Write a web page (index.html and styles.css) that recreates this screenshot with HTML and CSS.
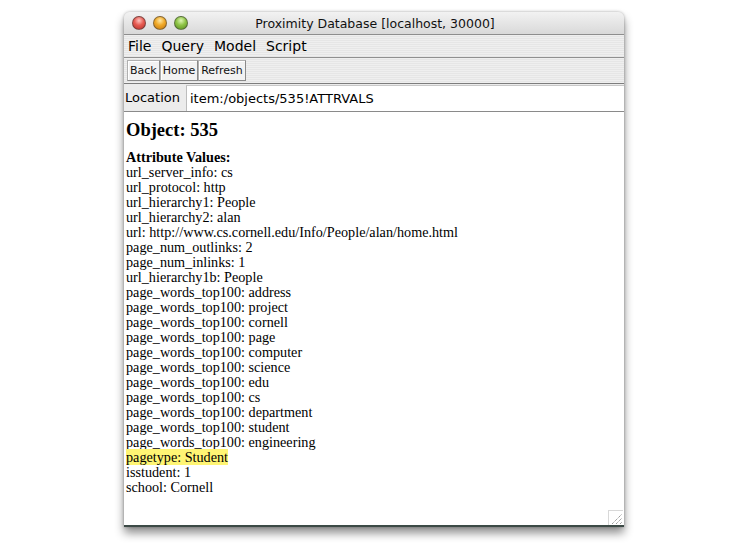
FILE: index.html
```html
<!DOCTYPE html>
<html>
<head>
<meta charset="utf-8">
<link rel="stylesheet" href="styles.css">
<title>Proximity Database</title>
</head>
<body>
<div class="stage">
  <div class="window">
    <div class="titlebar">
      <div class="lights">
        <span class="light red"></span>
        <span class="light yellow"></span>
        <span class="light green"></span>
      </div>
      <div class="title">Proximity Database [localhost, 30000]</div>
    </div>
    <div class="menubar">
      <span class="menu">File</span>
      <span class="menu">Query</span>
      <span class="menu">Model</span>
      <span class="menu">Script</span>
    </div>
    <div class="toolbar">
      <button class="tbtn">Back</button><button class="tbtn">Home</button><button class="tbtn">Refresh</button>
    </div>
    <div class="locationbar">
      <span class="loclabel">Location</span>
      <div class="locfield">item:/objects/535!ATTRVALS</div>
    </div>
    <div class="content">
      <h1 class="objtitle">Object: 535</h1>
      <div class="attrs">
        <div class="attrhead">Attribute Values:</div>
        <div>url_server_info: cs</div>
        <div>url_protocol: http</div>
        <div>url_hierarchy1: People</div>
        <div>url_hierarchy2: alan</div>
        <div>url: http://www.cs.cornell.edu/Info/People/alan/home.html</div>
        <div>page_num_outlinks: 2</div>
        <div>page_num_inlinks: 1</div>
        <div>url_hierarchy1b: People</div>
        <div>page_words_top100: address</div>
        <div>page_words_top100: project</div>
        <div>page_words_top100: cornell</div>
        <div>page_words_top100: page</div>
        <div>page_words_top100: computer</div>
        <div>page_words_top100: science</div>
        <div>page_words_top100: edu</div>
        <div>page_words_top100: cs</div>
        <div>page_words_top100: department</div>
        <div>page_words_top100: student</div>
        <div>page_words_top100: engineering</div>
        <div><span class="hl">pagetype: Student</span></div>
        <div>isstudent: 1</div>
        <div>school: Cornell</div>
      </div>
      <div class="grip">
        <svg width="14" height="14" viewBox="0 0 14 14">
          <path d="M3 13 L13 3 M7 13 L13 7 M11 13 L13 11" stroke="#8a8a8a" stroke-width="1" stroke-dasharray="1.2 0.8" fill="none"/>
        </svg>
      </div>
    </div>
  </div>
</div>
</body>
</html>
```

FILE: styles.css
```css
html, body {
  margin: 0;
  padding: 0;
  background: #ffffff;
}
.stage {
  width: 750px;
  height: 545px;
  padding: 12px 0 0 124px;
  box-sizing: border-box;
}
.window {
  width: 500px;
  height: 515px;
  display: flex;
  flex-direction: column;
  border-radius: 6px 6px 0 0;
  box-shadow: 0 6px 10px rgba(0,0,0,0.45), 0 0 3px rgba(0,0,0,0.3);
  background: #ececec;
  border-bottom: 2px solid #3c4a46;
  box-sizing: border-box;
  font-family: "DejaVu Sans", "Lucida Grande", sans-serif;
  color: #000;
}
.titlebar {
  height: 22px;
  flex: none;
  display: flex;
  align-items: center;
  border-radius: 6px 6px 0 0;
  background: linear-gradient(#f2f2f2, #d9d9d9);
  border-bottom: 1px solid #8e8e8e;
}
.lights {
  display: flex;
  gap: 7px;
  padding-left: 8px;
}
.light {
  width: 14px;
  height: 14px;
  border-radius: 50%;
  box-sizing: border-box;
  border: 1px solid rgba(60,60,60,0.55);
}
.red { background: radial-gradient(circle at 50% 30%, #ffc4c0 0%, #e65b52 45%, #b8302a 100%); }
.yellow { background: radial-gradient(circle at 50% 30%, #ffe9a6 0%, #f0a928 45%, #c5770e 100%); }
.green { background: radial-gradient(circle at 50% 30%, #def7b4 0%, #8ec446 45%, #5a8f20 100%); }
.title {
  flex: 1;
  text-align: center;
  font-size: 12.5px;
  padding-right: 62px;
  color: #111;
}
.menubar {
  height: 22px;
  flex: none;
  display: flex;
  align-items: center;
  gap: 10px;
  padding-left: 4px;
  font-size: 14px;
  background: repeating-linear-gradient(#efefef 0 1px, #e6e6e6 1px 2px);
  border-bottom: 1px solid #909090;
}
.toolbar {
  height: 25px;
  flex: none;
  display: flex;
  align-items: center;
  padding-left: 3px;
  background: repeating-linear-gradient(#efefef 0 1px, #e6e6e6 1px 2px);
  border-bottom: 1px solid #7d7d7d;
}
.tbtn {
  height: 21px;
  margin: 0;
  padding: 0 2px;
  font-family: "DejaVu Sans", sans-serif;
  font-size: 11px;
  color: #111;
  background: #f2f2f2;
  border: 1px solid #8a8a8a;
  border-left-color: #b0b0b0;
  border-top-color: #b0b0b0;
  box-shadow: inset 1px 1px 0 #ffffff;
}
.locationbar {
  height: 27px;
  flex: none;
  display: flex;
  align-items: stretch;
  background: #ececec;
  border-bottom: 1px solid #8a8a8a;
}
.loclabel {
  width: 61px;
  flex: none;
  display: flex;
  align-items: center;
  padding-left: 1px;
  font-size: 13px;
}
.locfield {
  flex: 1;
  display: flex;
  align-items: center;
  padding-left: 3px;
  background: #fff;
  border-left: 1px solid #bdbdbd;
  border-top: 1px solid #c8c8c8;
  font-size: 13px;
  margin-top: 1px;
}
.content {
  flex: 1;
  background: #fff;
  padding: 0 2px;
  position: relative;
  font-family: "Liberation Serif", "Times New Roman", serif;
  font-size: 14.2px;
}
.objtitle {
  font-size: 18.5px;
  font-weight: bold;
  margin: 7px 0 9px 0;
  line-height: 22px;
}
.attrs {
  line-height: 15px;
}
.attrhead {
  font-weight: bold;
}
.hl {
  background: #fff574;
}
.grip {
  position: absolute;
  right: 1px;
  bottom: 0;
  width: 14px;
  height: 14px;
  border-left: 1px solid #d8d8d8;
  border-top: 1px solid #d8d8d8;
}
```
